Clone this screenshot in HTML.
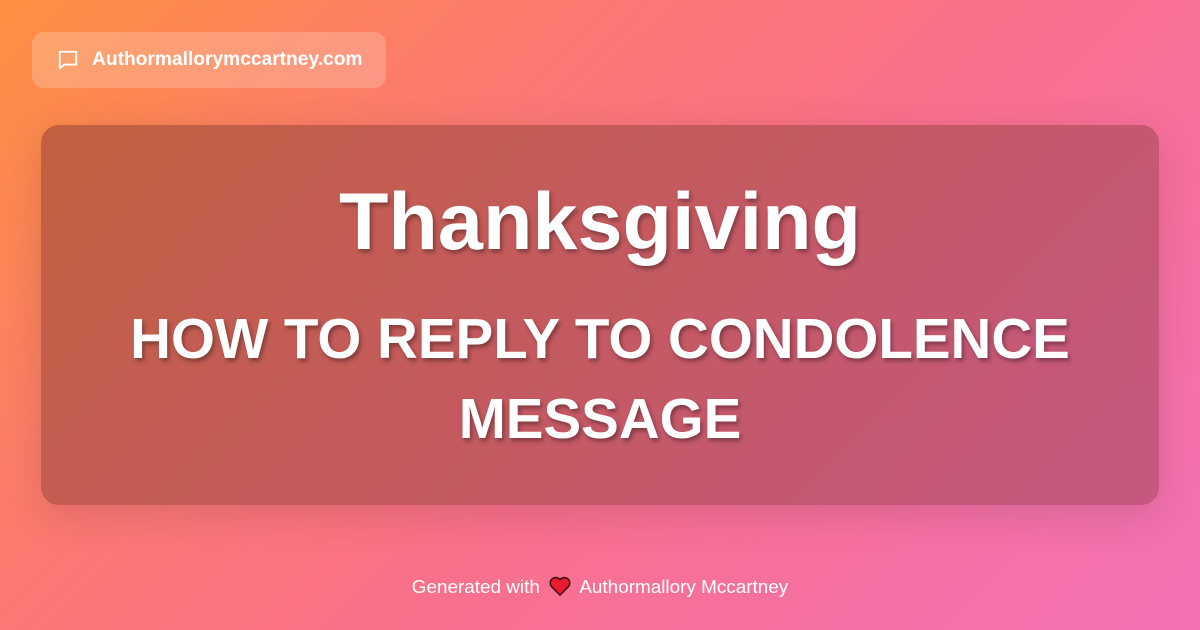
<!DOCTYPE html>
<html><head><meta charset="utf-8"><style>
*{margin:0;padding:0;box-sizing:border-box}
body{width:1200px;height:630px;overflow:hidden;font-family:"Liberation Sans",Arial,sans-serif;
background:linear-gradient(135deg,#fd9040 0%,#fb7a6e 30%,#f9708a 55%,#f570a4 80%,#f272b4 100%);position:relative}
.badge{position:absolute;left:32px;top:32px;width:354px;height:56px;border-radius:12px;background:rgba(255,255,255,0.2);
display:flex;align-items:center;color:#fff;font-weight:bold;font-size:19.2px}
.badge svg{margin-left:25px;margin-right:13px}
.card{position:absolute;left:41px;top:125px;width:1118px;height:380px;border-radius:18px;
background:linear-gradient(135deg,rgba(178,85,60,0.78),rgba(180,78,112,0.72));box-shadow:0 10px 40px rgba(0,0,0,0.12);
text-align:center;color:#fff}
h1{font-size:81px;font-weight:bold;margin-top:53px;line-height:88px;text-shadow:2px 3px 4px rgba(0,0,0,0.35)}
h2{font-size:56.5px;font-weight:bold;margin-top:33px;line-height:80px;text-shadow:2px 3px 4px rgba(0,0,0,0.35)}
.foot{position:absolute;top:576px;left:0;width:1200px;text-align:center;color:#fff;font-size:18.9px}
.foot svg{vertical-align:-3px;margin:0 4px}
</style></head><body>
<div class="badge"><svg width="22" height="22" viewBox="0 0 24 24" fill="none" stroke="#fff" stroke-width="2" stroke-linejoin="round"><path d="M3 3h18v14H8l-5 4z"/></svg>Authormallorymccartney.com</div>
<div class="card"><h1>Thanksgiving</h1><h2>HOW TO REPLY TO CONDOLENCE<br>MESSAGE</h2></div>
<div class="foot">Generated with <svg width="22" height="20" viewBox="0 0 24 22"><path d="M12 21L2.5 11.5A5.5 5.5 0 0 1 12 4a5.5 5.5 0 0 1 9.5 7.5z" fill="#e81c2e" stroke="#3a0a0a" stroke-width="1.6"/></svg> Authormallory Mccartney</div>
</body></html>
